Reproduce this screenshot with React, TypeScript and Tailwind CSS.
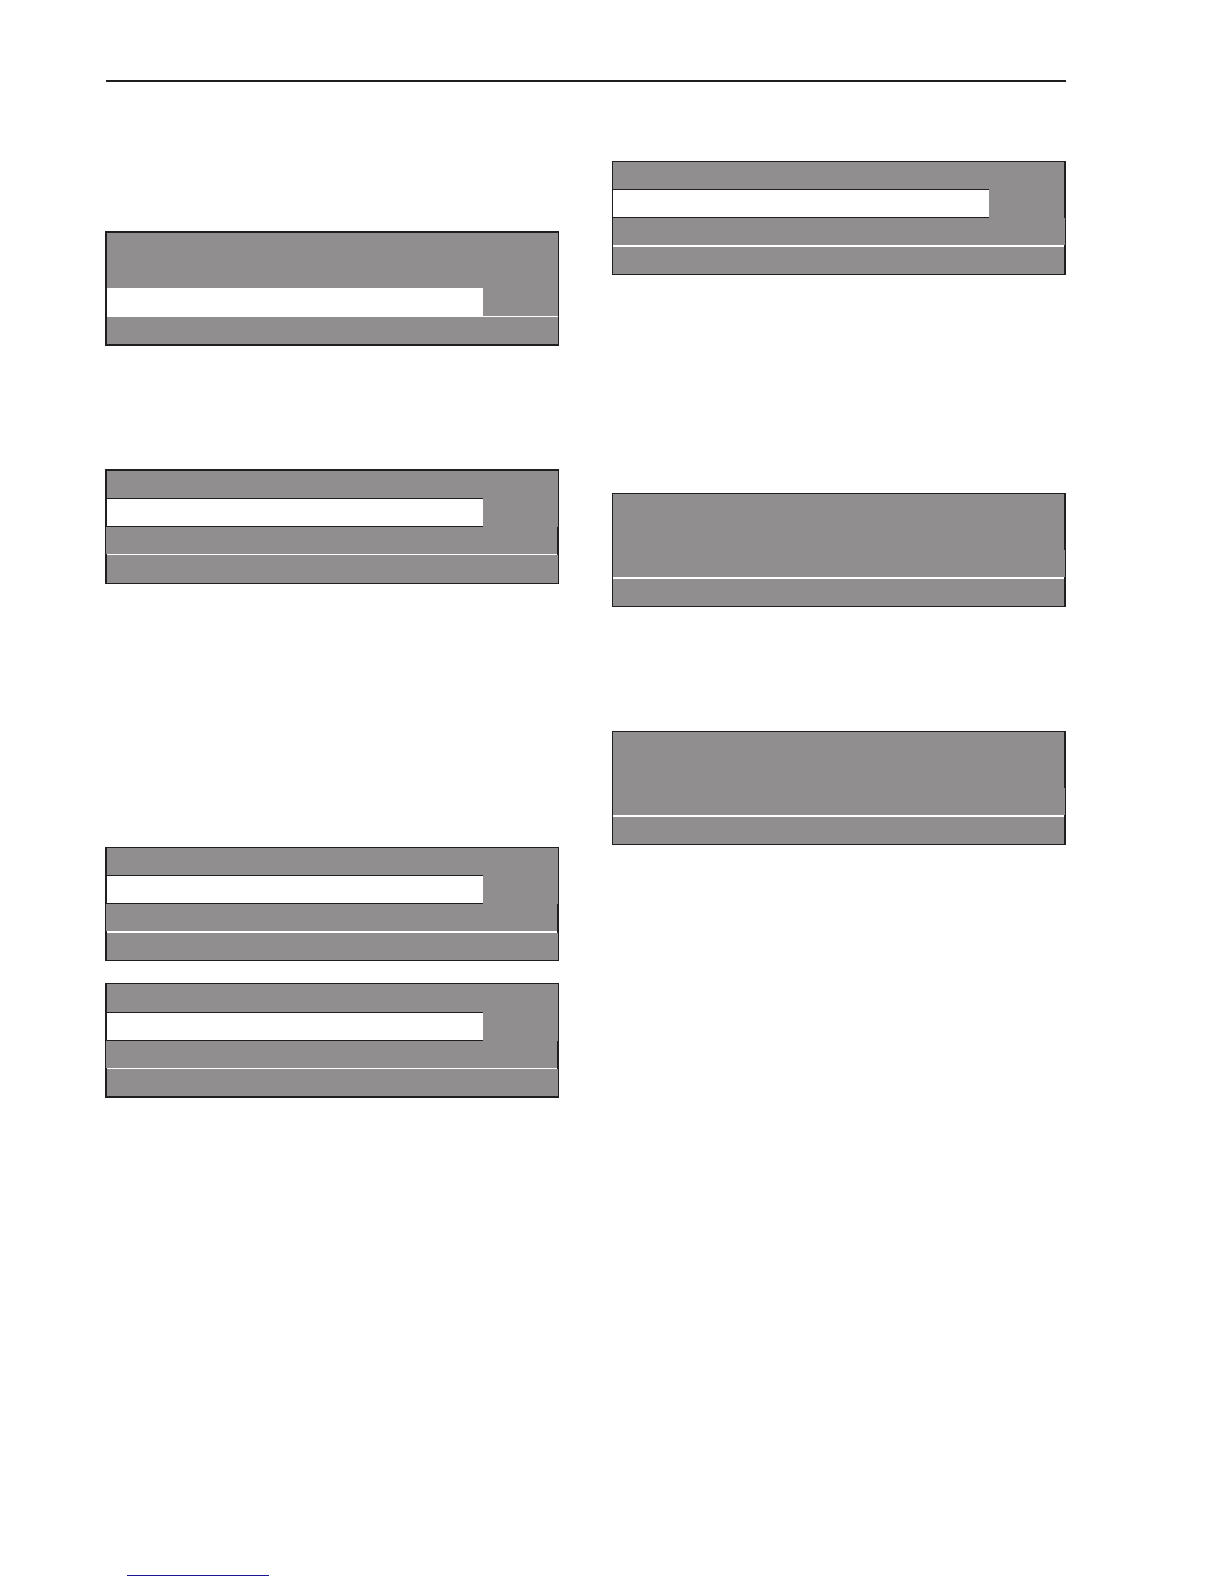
import clsx from 'clsx';

type Side = 'left' | 'right';

interface DisplayProps {
  side: Side;
  selected?: 'middle' | 'bottom';
  className?: string;
  // thickness of the frame and divider lines
  top?: string;
  bottom?: string;
  divider?: string;
  titleRow?: string;
  footRow?: string;
}

const frame = {
  left: 'border-l-2 border-r',
  right: 'border-l border-r-2',
};

const thirdRow = {
  left: 'border-l border-r-2',
  right: 'border-x',
};

const dividerFrame = {
  left: 'border-x-2',
  right: 'border-l border-r-2',
};

const Display = ({
  side,
  selected,
  className,
  top = 'border-t',
  bottom = 'border-b',
  divider = 'h-px',
  titleRow = 'h-[27px]',
  footRow = 'h-[27px]',
}: DisplayProps) => {
  return (
    <div className={clsx('flex flex-col border-[#211e20]', top, bottom, className)}>
      {selected === 'bottom' ? (
        <>
          <div className="h-[55px] border-l-2 border-r border-[#211e20] bg-[#908e8f]" />
          <div className="h-[28px] border-l-2 border-r border-[#211e20] bg-[#908e8f]">
            <div className="h-full w-5/6 bg-white" />
          </div>
          <div className={clsx('border-l-2 border-r border-[#211e20] bg-white', divider)} />
        </>
      ) : (
        <>
          <div className={clsx('border-[#211e20] bg-[#908e8f]', titleRow, frame[side])} />
          <div className={clsx('h-[29px] border-[#211e20] bg-[#908e8f]', frame[side])}>
            {selected === 'middle' && (
              <div className="h-full w-5/6 border-y border-[#211e20] bg-white" />
            )}
          </div>
          <div className={clsx('h-[27px] border-[#211e20] bg-[#908e8f]', thirdRow[side])} />
          <div className={clsx('border-[#211e20] bg-white', divider, dividerFrame[side])} />
        </>
      )}
      <div className={clsx('border-[#211e20] bg-[#908e8f]', footRow, frame[side])} />
    </div>
  );
};

export default function App() {
  return (
    <div className="flex min-h-screen flex-col bg-white pt-20 pr-[158px] pb-2 pl-[105px] font-['Liberation_Sans',sans-serif]">
      <header className="ml-px h-0.5 bg-[#211e20]" />

      <main className="grid grid-cols-2 items-start gap-x-[53px]">
        <section className="flex flex-col pt-[149px]">
          <Display side="left" selected="bottom" top="border-t-2" bottom="border-b-2" />
          <Display side="left" selected="middle" top="border-t-2" footRow="h-[28px]" className="mt-[123px]" />
          <Display side="left" selected="middle" divider="h-0.5" className="mt-[263px]" />
          <Display side="left" selected="middle" bottom="border-b-2" titleRow="h-[28px]" className="mt-[22px]" />
        </section>

        <section className="flex flex-col pt-[79px]">
          <Display side="right" selected="middle" divider="h-0.5" />
          <Display side="right" divider="h-0.5" className="mt-[218px]" />
          <Display side="right" divider="h-0.5" className="mt-[124px]" />
        </section>
      </main>

      <footer className="mt-auto pl-[22px]">
        <a href="#" aria-label="Website" className="block h-5 w-[142px] border-b border-[#1a1690]" />
      </footer>
    </div>
  );
}
